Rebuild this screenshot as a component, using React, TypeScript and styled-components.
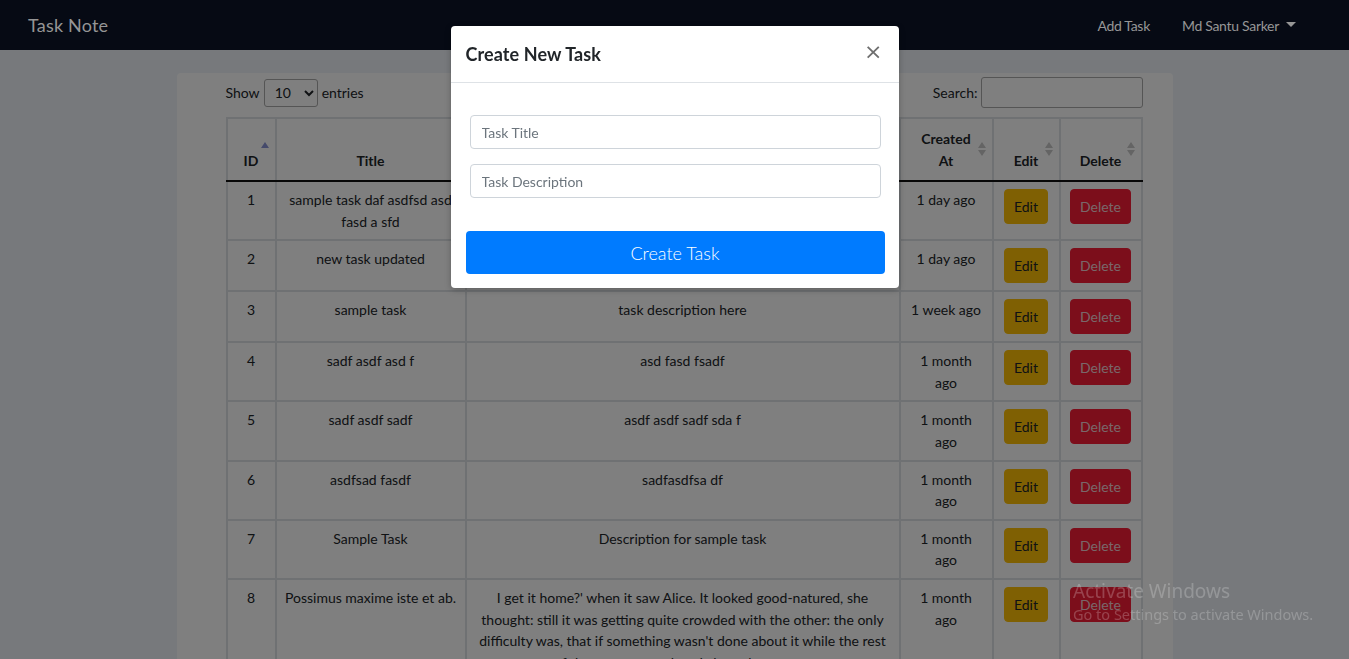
import * as React from 'react';
import styled, { createGlobalStyle } from 'styled-components';

interface ITask {
  id: number;
  title: string;
  description: string;
  createdAt: string;
}

const tasks: ITask[] = [
  { id: 1, title: 'sample task daf asdfsd asd fasd a sfd', description: 'sample task description', createdAt: '1 day ago' },
  { id: 2, title: 'new task updated', description: 'new task description updated', createdAt: '1 day ago' },
  { id: 3, title: 'sample task', description: 'task description here', createdAt: '1 week ago' },
  { id: 4, title: 'sadf asdf asd f', description: 'asd fasd fsadf', createdAt: '1 month ago' },
  { id: 5, title: 'sadf asdf sadf', description: 'asdf asdf sadf sda f', createdAt: '1 month ago' },
  { id: 6, title: 'asdfsad fasdf', description: 'sadfasdfsa df', createdAt: '1 month ago' },
  { id: 7, title: 'Sample Task', description: 'Description for sample task', createdAt: '1 month ago' },
  {
    id: 8,
    title: 'Possimus maxime iste et ab.',
    description:
      "I get it home?' when it saw Alice. It looked good-natured, she thought: still it was getting quite crowded with the other: the only difficulty was, that if something wasn't done about it while the rest of the party were placed along the course.",
    createdAt: '1 month ago'
  }
];

const columns = [
  { key: 'id', label: 'ID', width: 49, sort: 'asc' as const },
  { key: 'title', label: 'Title', width: 190 },
  { key: 'description', label: 'Description', width: 434 },
  { key: 'createdAt', label: 'Created At', width: 93 },
  { key: 'edit', label: 'Edit', width: 67 },
  { key: 'delete', label: 'Delete', width: 82 }
];

const GlobalStyle = createGlobalStyle`
  * { box-sizing: border-box; }
  body {
    margin: 0;
    height: 659px;
    overflow: hidden;
    background: #eef2f8;
    font-family: Lato, "Open Sans", sans-serif;
    font-size: 14px;
    color: #212529;
  }
`;

export default function App() {
  return (
    <>
      <GlobalStyle />
      <Navbar>
        <Brand>Task Note</Brand>
        <NavLinks>
          <NavLink>Add Task</NavLink>
          <NavLink>
            Md Santu Sarker <Caret />
          </NavLink>
        </NavLinks>
      </Navbar>

      <Main>
        <Card>
          <TableTools>
            <Label>
              Show
              <Select defaultValue="10">
                <option>10</option>
                <option>25</option>
                <option>50</option>
              </Select>
              entries
            </Label>
            <Label>
              Search:
              <SearchInput type="search" />
            </Label>
          </TableTools>

          <Table>
            <colgroup>
              {columns.map((c) => (
                <col key={c.key} style={{ width: c.width }} />
              ))}
            </colgroup>
            <thead>
              <tr>
                {columns.map((c) => (
                  <Th key={c.key}>
                    {c.label}
                    <SortIcon $active={c.sort === 'asc'} />
                  </Th>
                ))}
              </tr>
            </thead>
            <tbody>
              {tasks.map((t) => (
                <tr key={t.id}>
                  <Td>{t.id}</Td>
                  <Td>{t.title}</Td>
                  <Td>{t.description}</Td>
                  <Td>{t.createdAt}</Td>
                  <Td>
                    <ActionButton $variant="edit">Edit</ActionButton>
                  </Td>
                  <Td>
                    <ActionButton $variant="delete">Delete</ActionButton>
                  </Td>
                </tr>
              ))}
            </tbody>
          </Table>
        </Card>
      </Main>

      <Backdrop />

      <ModalLayer>
        <Modal>
          <ModalHeader>
            <ModalTitle>Create New Task</ModalTitle>
            <CloseButton aria-label="Close">&times;</CloseButton>
          </ModalHeader>
          <ModalBody>
            <Fields>
              <Input placeholder="Task Title" />
              <Input placeholder="Task Description" />
            </Fields>
            <PrimaryButton>Create Task</PrimaryButton>
          </ModalBody>
        </Modal>
      </ModalLayer>

      <Watermark>
        <WatermarkTitle>Activate Windows</WatermarkTitle>
        <WatermarkText>Go to Settings to activate Windows.</WatermarkText>
      </Watermark>
    </>
  );
}

const Navbar = styled.nav`
  position: relative;
  z-index: 1045;
  height: 50px;
  display: flex;
  align-items: center;
  justify-content: space-between;
  padding: 0 53px 0 28px;
  background: #060a14;
`;

const Brand = styled.div`
  font-size: 18px;
  color: #959595;
  letter-spacing: 0.2px;
`;

const NavLinks = styled.div`
  display: flex;
  align-items: center;
  gap: 32px;
`;

const NavLink = styled.span`
  display: flex;
  align-items: center;
  gap: 7px;
  font-size: 14px;
  letter-spacing: -0.3px;
  color: #969696;
`;

const Caret = styled.span`
  width: 0;
  height: 0;
  border-left: 5px solid transparent;
  border-right: 5px solid transparent;
  border-top: 5px solid #969696;
  margin-top: -2px;
`;

const Main = styled.main`
  padding-top: 23px;
`;

const Card = styled.section`
  width: 996px;
  margin: 0 auto;
  background: #fff;
  border-radius: 4px;
  padding: 4px 30px 0 49px;
`;

const TableTools = styled.div`
  display: flex;
  justify-content: space-between;
  align-items: center;
  height: 31px;
  margin-bottom: 9px;
`;

const Label = styled.label`
  display: flex;
  align-items: center;
  gap: 3px;
  font-size: 14px;
  color: #212529;
`;

const Select = styled.select`
  width: 54px;
  height: 28px;
  margin: 0 1px;
  padding: 0 6px;
  border: 1px solid #aaa;
  border-radius: 3px;
  background: #fff;
  font-family: Lato, sans-serif;
  font-size: 14px;
  color: #212529;
`;

const SearchInput = styled.input`
  width: 162px;
  height: 31px;
  border: 1px solid #aaa;
  border-radius: 3px;
  background: #fff;
`;

const Table = styled.table`
  width: 915px;
  table-layout: fixed;
  border-collapse: collapse;
  font-size: 14px;
  line-height: 21.6px;
`;

const Th = styled.th`
  position: relative;
  padding: 8px 14px;
  border: 2px solid #dee2e6;
  border-bottom: 2px solid #111;
  vertical-align: bottom;
  text-align: center;
  font-weight: 700;
  line-height: 22px;
  height: 63px;
`;

const SortIcon = styled.span<{ $active?: boolean }>`
  position: absolute;
  right: 6px;
  top: 50%;
  transform: translateY(-1px);
  width: 0;
  height: 0;

  &::before,
  &::after {
    content: '';
    position: absolute;
    right: 0;
    border-left: 4px solid transparent;
    border-right: 4px solid transparent;
  }
  &::before {
    bottom: 1px;
    border-bottom: 6px solid ${(p) => (p.$active ? '#8b95d6' : '#c8c8c8')};
  }
  &::after {
    top: 1px;
    border-top: 6px solid ${(p) => (p.$active ? 'transparent' : '#c8c8c8')};
  }
`;

const Td = styled.td`
  padding: 7px 8px;
  border: 2px solid #dee2e6;
  vertical-align: top;
  text-align: center;
`;

const ActionButton = styled.button<{ $variant: 'edit' | 'delete' }>`
  display: inline-block;
  padding: 6px 9px;
  border: 1px solid ${(p) => (p.$variant === 'edit' ? '#ffc107' : '#f81d37')};
  border-radius: 4px;
  background: ${(p) => (p.$variant === 'edit' ? '#ffc107' : '#f81d37')};
  color: ${(p) => (p.$variant === 'edit' ? '#212529' : '#f3cfd4')};
  font-family: Lato, sans-serif;
  font-size: 14px;
  line-height: 21px;
`;

const Backdrop = styled.div`
  position: fixed;
  inset: 0;
  z-index: 1040;
  background: rgba(0, 0, 0, 0.5);
`;

const ModalLayer = styled.div`
  position: fixed;
  inset: 0;
  z-index: 1050;
  display: flex;
  justify-content: center;
  align-items: flex-start;
  padding-top: 26px;
`;

const Modal = styled.div`
  width: 448px;
  background: #fff;
  border-radius: 4px;
  box-shadow: 0 2px 6px rgba(0, 0, 0, 0.25);
`;

const ModalHeader = styled.div`
  display: flex;
  align-items: center;
  justify-content: space-between;
  height: 57px;
  padding: 0 16px 0 15px;
  border-bottom: 1px solid #dee2e6;
`;

const ModalTitle = styled.h5`
  margin: 0;
  font-size: 18px;
  font-weight: 700;
  color: #212529;
  letter-spacing: 0.1px;
`;

const CloseButton = styled.button`
  padding: 0;
  margin-top: -4px;
  border: 0;
  background: none;
  font-family: "DejaVu Sans", sans-serif;
  font-size: 22px;
  font-weight: 400;
  line-height: 1;
  color: #6f6f6f;
`;

const ModalBody = styled.div`
  padding: 32px 14px 14px 15px;
`;

const Fields = styled.div`
  display: flex;
  flex-direction: column;
  gap: 15px;
  padding: 0 4px;
  margin-bottom: 33px;
`;

const Input = styled.input`
  height: 34px;
  padding: 0 11px;
  border: 1px solid #ced4da;
  border-radius: 4px;
  font-family: Lato, sans-serif;
  font-size: 14px;
  color: #495057;

  &::placeholder {
    color: #6c757d;
  }
`;

const PrimaryButton = styled.button`
  width: 100%;
  height: 43px;
  border: 0;
  border-radius: 4px;
  background: #007bff;
  color: #fff;
  font-family: Lato, sans-serif;
  font-size: 18px;
  font-weight: 300;
`;

const Watermark = styled.div`
  position: fixed;
  left: 1073px;
  top: 578px;
  z-index: 2000;
  color: rgba(255, 255, 255, 0.22);
  font-family: "Noto Sans", "Open Sans", sans-serif;
  pointer-events: none;
`;

const WatermarkTitle = styled.div`
  font-size: 19px;
  line-height: 26px;
`;

const WatermarkText = styled.div`
  font-size: 14.5px;
  line-height: 20px;
`;
